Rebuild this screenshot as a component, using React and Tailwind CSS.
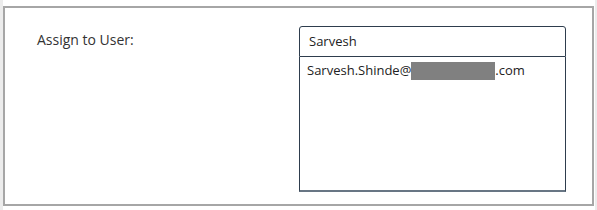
import React from "react";

const AssignUserPanel = () => {
  return (
    <div
      className="w-[597px] h-[210px] bg-white pt-[6px] pb-[4px] border-l-[3px] border-l-[#ececec] border-r-[2px] border-r-[#ececec] pr-[1px]"
      style={{ fontFamily: '"Open Sans", "Liberation Sans", sans-serif' }}
    >
      <div className="h-full border-2 border-[#a6a6a6] bg-white flex pl-[32px] pt-[18px]">
        {/* Label */}
        <div className="w-[262px] pt-[3px] text-[14px] text-[#333333]">
          Assign to User:
        </div>

        {/* Lookup */}
        <div className="flex flex-col w-[267px]">
          <div className="h-[31px] border border-[#2e3d4d] rounded-t-[3px] flex items-center pl-[9px] text-[13px] text-[#222222]">
            Sarvesh
          </div>
          <div className="h-[135px] border border-[#2e3d4d] border-t-0 border-b-2 border-b-[#687684] pl-[7px] pt-[4px] text-[13px] text-[#222222]">
            <div className="flex items-center">
              <span>Sarvesh.Shinde@</span>
              <span className="inline-block w-[84px] h-[18px] bg-[#808080]"></span>
              <span>.com</span>
            </div>
          </div>
        </div>
      </div>
    </div>
  );
};

export default function App() {
  return <AssignUserPanel />;
}
